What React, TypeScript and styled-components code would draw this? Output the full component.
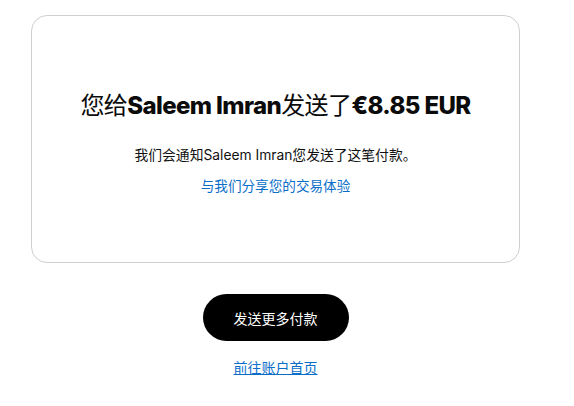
import styled, { createGlobalStyle } from "styled-components";

const GlobalStyle = createGlobalStyle`
  body {
    margin: 0;
    background: #fff;
    font-family: "Inter", "Noto Sans CJK SC", sans-serif;
    color: #000;
  }
`;

const Page = styled.div`
  width: 489px;
  padding: 15px 0 0 31px;
  display: flex;
  flex-direction: column;
  align-items: center;
`;

const Card = styled.div`
  box-sizing: border-box;
  width: 100%;
  height: 248px;
  border: 1px solid #cfcfcf;
  border-radius: 16px;
  display: flex;
  flex-direction: column;
  align-items: center;
  padding-top: 74px;
`;

const Heading = styled.h1`
  margin: 0;
  font-size: 24px;
  line-height: 32px;
  font-weight: 400;
  letter-spacing: -0.6px;
  color: #0b0b0b;
`;

const Strong = styled.span`
  font-weight: 800;
`;

const Note = styled.p`
  margin: 23px 0 0;
  font-size: 13.8px;
  line-height: 20px;
  color: #111;
`;

const ShareLink = styled.a`
  margin-top: 11px;
  font-size: 13.6px;
  line-height: 20px;
  color: #0a6ec9;
  text-decoration: none;
`;

const PrimaryButton = styled.button`
  margin-top: 31px;
  width: 146px;
  height: 47px;
  border: none;
  border-radius: 24px;
  background: #000;
  color: #fff;
  font-family: inherit;
  font-size: 14px;
`;

const HomeLink = styled.a`
  margin-top: 17px;
  font-size: 14px;
  line-height: 20px;
  color: #0a6ec9;
  text-decoration: underline;
`;

const App = () => (
  <>
    <GlobalStyle />
    <Page>
      <Card>
        <Heading>
          您给<Strong>Saleem Imran</Strong>发送了<Strong>€8.85 EUR</Strong>
        </Heading>
        <Note>我们会通知Saleem Imran您发送了这笔付款。</Note>
        <ShareLink href="#">与我们分享您的交易体验</ShareLink>
      </Card>
      <PrimaryButton>发送更多付款</PrimaryButton>
      <HomeLink href="#">前往账户首页</HomeLink>
    </Page>
  </>
);

export default App;
